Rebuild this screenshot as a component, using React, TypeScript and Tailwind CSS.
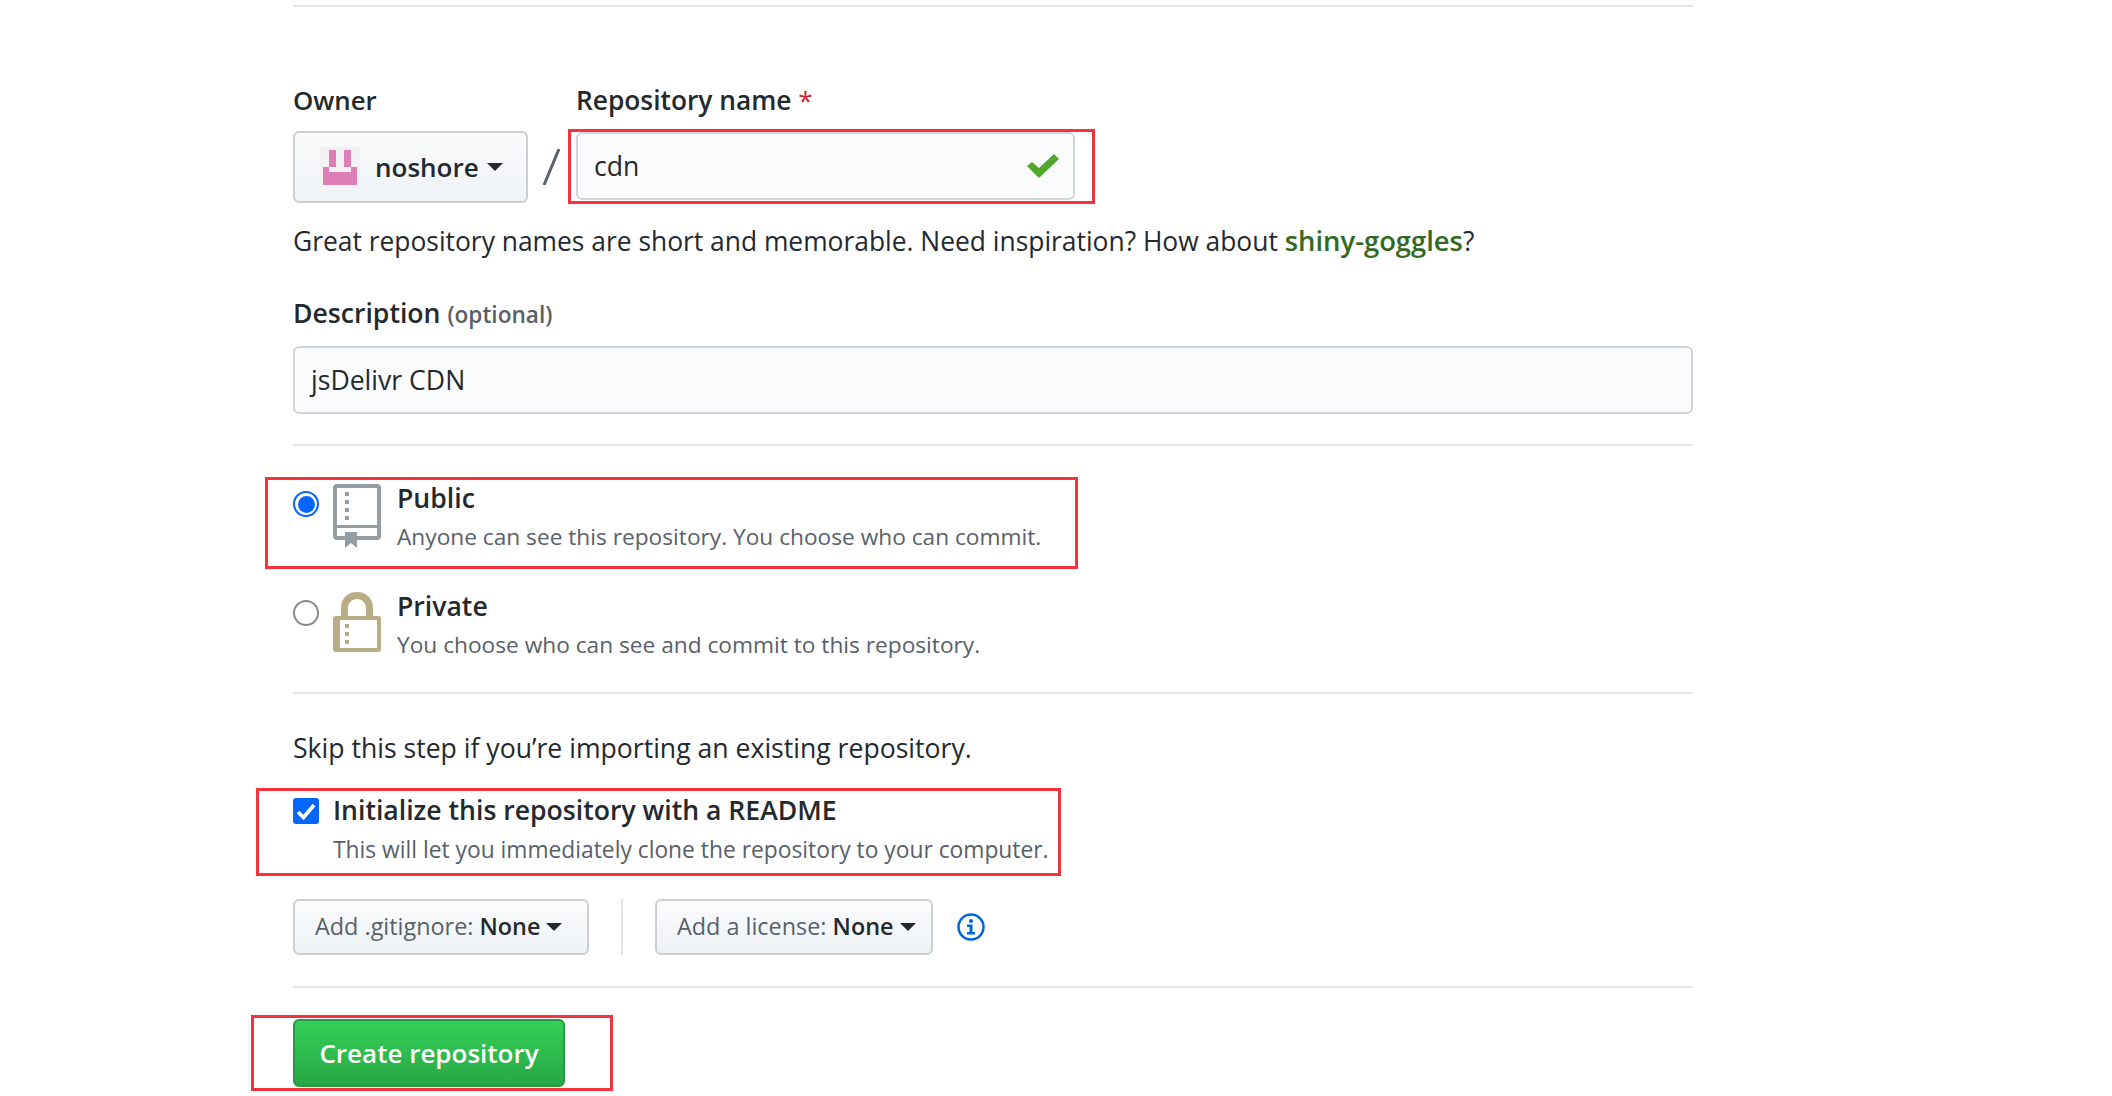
const Caret = ({ className }: { className: string }) => (
  <span className={`inline-block border-x-[8px] border-t-[8px] border-x-transparent border-t-[#24292e] ${className}`} />
);

const Divider = ({ className }: { className: string }) => <div className={`h-[2px] bg-[#e1e4e8] ${className}`} />;

const RedBox = ({ className }: { className: string }) => (
  <div className={`pointer-events-none absolute border-[3px] border-[#f5333f] ${className}`} />
);

const BookIcon = () => (
  <svg width="48" height="64" viewBox="0 0 48 64" className="shrink-0">
    <path
      fillRule="evenodd"
      fill="#959da5"
      d="M4 0h40a4 4 0 0 1 4 4v48a4 4 0 0 1-4 4H24v8l-6-5-6 5v-8H4a4 4 0 0 1-4-4V4a4 4 0 0 1 4-4ZM4 4v37h40V4ZM4 44v8h8v-4h12v4h20v-8Z"
    />
    <rect x="12" y="8" width="4" height="4" fill="#959da5" />
    <rect x="12" y="16" width="4" height="4" fill="#959da5" />
    <rect x="12" y="24" width="4" height="4" fill="#959da5" />
    <rect x="12" y="32" width="4" height="4" fill="#959da5" />
  </svg>
);

const LockIcon = () => (
  <svg width="48" height="60" viewBox="0 0 48 60" className="shrink-0">
    <path
      fillRule="evenodd"
      fill="#b8ad84"
      d="M8 24V16C8 6 15 0 24 0s16 6 16 16v8h5a3 3 0 0 1 3 3v30a3 3 0 0 1-3 3H3a3 3 0 0 1-3-3V27a3 3 0 0 1 3-3ZM15 24h18V16c0-5-4-9-9-9s-9 4-9 9ZM7 28v28h37V28Z"
    />
    <rect x="12" y="32" width="4" height="4" fill="#b8ad84" />
    <rect x="12" y="40" width="4" height="4" fill="#b8ad84" />
    <rect x="12" y="48" width="4" height="4" fill="#b8ad84" />
  </svg>
);

const Avatar = () => (
  <svg width="40" height="40" viewBox="0 0 40 40" className="shrink-0">
    <rect width="40" height="40" rx="3" fill="#f2f2f2" />
    <path fill="#dd7fb6" d="M9 3h7v17h8V3h7v17h6v18H3V20h6Z" />
    <rect x="9" y="20" width="22" height="5" fill="#f7f0f4" />
  </svg>
);

const App = () => {
  return (
    <div className="h-[1096px] overflow-hidden bg-white font-['Open_Sans','Noto_Sans',sans-serif] text-[26.6px] text-[#24292e]">
      <div className="ml-[293px] w-[1400px] pt-[5px]">
        <Divider className="" />

        <div className="mt-[63px] flex items-start">
          <div className="w-[283px]">
            <div className="h-[61px] text-[25.8px] font-semibold leading-[60px]">Owner</div>
            <div className="flex items-center">
              <button className="flex h-[72px] w-[235px] items-center rounded-md border-2 border-[#ccced1] bg-gradient-to-b from-[#fafbfc] to-[#eff3f6] pl-[25px] text-[26px] font-semibold">
                <Avatar />
                <span className="ml-[15px]">noshore</span>
                <Caret className="ml-[8px]" />
              </button>
              <svg width="20" height="36" viewBox="0 0 20 36" className="ml-[13px]">
                <path d="M18 0 3 36" stroke="#586069" strokeWidth="3" />
              </svg>
            </div>
          </div>
          <div className="relative w-[499px]">
            <div className="h-[62px] text-[26.3px] font-semibold leading-[60px]">
              Repository name <span className="font-normal text-[#cb2431]">*</span>
            </div>
            <div className="flex h-[68px] items-center justify-between rounded-md border-2 border-[#d1d5da] bg-[#fafbfc] pl-[16px] pr-[14px]">
              <span className="pt-[2px]">cdn</span>
              <svg width="32" height="24" viewBox="0 0 32 24">
                <path d="M0 12l5-4 7 6L27 0l5 5-20 19Z" fill="#4fa82b" />
              </svg>
            </div>
            <RedBox className="-left-[8px] -right-[20px] top-[59px] h-[75px]" />
          </div>
        </div>

        <p className="mt-[19px] text-[26.4px] leading-[38px]">
          Great repository names are short and memorable. Need inspiration? How about{' '}
          <span className="text-[27.4px] font-semibold text-[#33691e]">shiny-goggles</span>?
        </p>

        <div className="mt-[32px] h-[42px] font-semibold leading-[42px]">
          Description <span className="text-[22.6px] text-[#586069]">(optional)</span>
        </div>
        <div className="mt-[12px] flex h-[68px] items-center rounded-md border-2 border-[#d1d5da] bg-[#fafbfc] pl-[16px] pt-[2px]">
          jsDelivr CDN
        </div>

        <Divider className="mt-[30px]" />

        <div className="relative mt-[33px] flex h-[84px] items-start">
          <RedBox className="-left-[28px] top-[-2px] h-[92px] w-[813px]" />
          <span className="mt-[12px] flex h-[26px] w-[26px] items-center justify-center rounded-full border-2 border-[#0366ff]">
            <span className="h-[17px] w-[17px] rounded-full bg-[#0366ff]" />
          </span>
          <div className="ml-[14px] mt-[5px]">
            <BookIcon />
          </div>
          <div className="ml-[16px]">
            <div className="h-[38px] font-semibold leading-[38px]">Public</div>
            <div className="text-[22.7px] leading-[40px] text-[#586069]">Anyone can see this repository. You choose who can commit.</div>
          </div>
        </div>

        <div className="mt-[24px] flex h-[82px] items-start">
          <span className="mt-[13px] h-[26px] w-[26px] rounded-full border-2 border-[#8a8a8a]" />
          <div className="ml-[14px] mt-[5px]">
            <LockIcon />
          </div>
          <div className="ml-[16px]">
            <div className="h-[38px] font-semibold leading-[38px]">Private</div>
            <div className="text-[22.7px] leading-[40px] text-[#586069]">You choose who can see and commit to this repository.</div>
          </div>
        </div>

        <Divider className="mt-[23px]" />

        <p className="mt-[35px] leading-[38px]">Skip this step if you’re importing an existing repository.</p>

        <div className="relative mt-[32px] flex h-[78px] items-start">
          <RedBox className="-left-[37px] top-[-11px] h-[88px] w-[805px]" />
          <span className="mt-[-1px] flex h-[26px] w-[26px] items-center justify-center rounded-[3px] bg-[#0366ff]">
            <svg width="26" height="26" viewBox="0 0 26 26">
              <path d="M5 14l5.5 5.5L21 7" fill="none" stroke="#fff" strokeWidth="3.6" />
            </svg>
          </span>
          <div className="ml-[14px] mt-[-8px]">
            <div className="h-[39px] font-semibold leading-[38px]">Initialize this repository with a README</div>
            <div className="text-[22.8px] leading-[40px] text-[#586069]">This will let you immediately clone the repository to your computer.</div>
          </div>
        </div>

        <div className="mt-[22px] flex h-[56px] items-center text-[23.4px]">
          <button className="flex h-[56px] w-[296px] items-center rounded-md border-2 border-[#ccced1] bg-gradient-to-b from-[#fafbfc] to-[#eff3f6] pl-[20px] font-medium text-[#586069]">
            Add .gitignore:&nbsp;<span className="font-semibold text-[#24292e]">None</span>
            <Caret className="ml-[6px]" />
          </button>
          <div className="ml-[32px] h-[56px] w-[2px] bg-[#e1e4e8]" />
          <button className="ml-[32px] flex h-[56px] w-[278px] items-center rounded-md border-2 border-[#ccced1] bg-gradient-to-b from-[#fafbfc] to-[#eff3f6] pl-[20px] font-medium text-[#586069]">
            Add a license:&nbsp;<span className="font-semibold text-[#24292e]">None</span>
            <Caret className="ml-[6px]" />
          </button>
          <svg width="28" height="28" viewBox="0 0 28 28" className="ml-[24px]">
            <circle cx="14" cy="14" r="12.5" fill="none" stroke="#0366d6" strokeWidth="2.5" />
            <circle cx="14" cy="8" r="2" fill="#0366d6" />
            <path d="M10 11.5h5.5V19H18v2.5h-8V19h2.5v-5H10Z" fill="#0366d6" />
          </svg>
        </div>

        <Divider className="mt-[31px]" />

        <div className="relative mt-[31px]">
          <RedBox className="-left-[42px] top-[-4px] h-[76px] w-[362px]" />
          <button className="h-[68px] w-[272px] rounded-md border-2 border-[#259a42] bg-gradient-to-b from-[#34d058] to-[#28a745] text-[26px] font-semibold text-white">
            Create repository
          </button>
        </div>
      </div>
    </div>
  );
};

export default App;
